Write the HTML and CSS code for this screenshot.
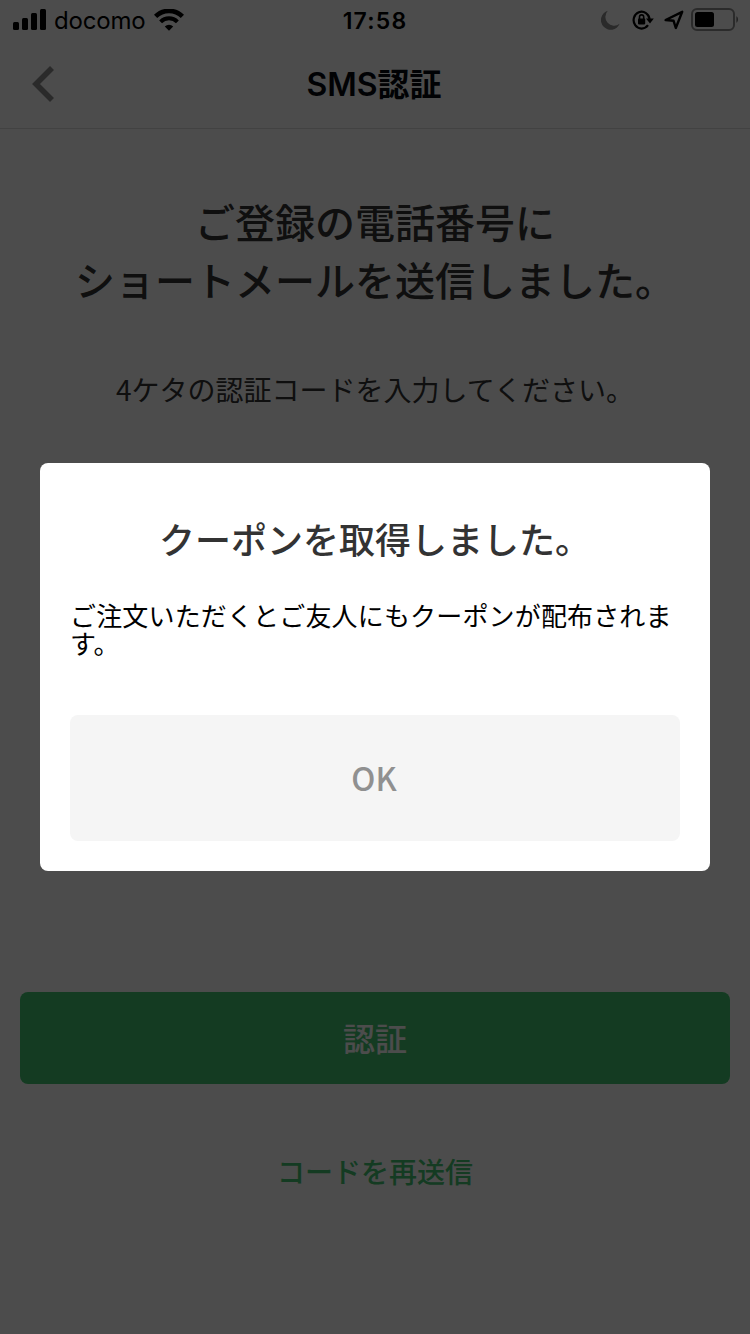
FILE: index.html
```html
<!DOCTYPE html>
<html lang="ja">
<head>
    <meta charset="UTF-8">
    <meta name="viewport" content="width=device-width, initial-scale=1.0">
    <title>SMS認証</title>
    <link rel="stylesheet" href="styles.css">
</head>
<body>

<div class="status-bar">
    <div class="status-left">
        <svg class="signal" width="34" height="22" viewBox="0 0 34 22">
            <rect x="0" y="13" width="6" height="8" rx="1.5"/>
            <rect x="9" y="9" width="6" height="12" rx="1.5"/>
            <rect x="18" y="4" width="6" height="17" rx="1.5"/>
            <rect x="27" y="0" width="6" height="21" rx="1.5"/>
        </svg>
        <span class="carrier">docomo</span>
        <svg class="wifi" width="30" height="22" viewBox="0 0 30 22">
            <path d="M1.6 7.4a19 19 0 0 1 26.8 0" fill="none" stroke="#000" stroke-width="4.6"/>
            <path d="M6.6 12.8a11.8 11.8 0 0 1 16.8 0" fill="none" stroke="#000" stroke-width="4"/>
            <path d="M10.8 17.4a6.2 6.2 0 0 1 8.4 0L15 21.8z"/>
        </svg>
    </div>
    <span class="time">17:58</span>
    <div class="status-right">
        <svg class="moon" width="20" height="20" viewBox="0 0 20 20">
            <path d="M6.8 0.8a9.7 9.7 0 1 0 11.8 13A8.8 8.8 0 0 1 6.8 0.8z" fill="#8c8c8c"/>
        </svg>
        <svg class="lock" width="22" height="20" viewBox="0 0 22 20">
            <path d="M17.6 9.5A8 8.4 0 1 0 16 15.2" fill="none" stroke="#000" stroke-width="2.2"/>
            <path d="M14 8.4h7.8l-3.8 5z"/>
            <rect x="6" y="8.4" width="7.2" height="6" rx="0.8"/>
            <path d="M7.5 9V7a2.1 2.1 0 0 1 4.2 0v2" fill="none" stroke="#000" stroke-width="1.6"/>
        </svg>
        <svg class="location" width="20" height="20" viewBox="0 0 20 20">
            <path d="M1.6 10L18.2 1.8L11.8 18L9.6 10.8z" fill="none" stroke="#000" stroke-width="2.4" stroke-linejoin="round"/>
        </svg>
        <svg class="battery" width="48" height="24" viewBox="0 0 48 24">
            <rect x="1" y="1" width="42" height="21" rx="5" fill="none" stroke="#8f8f8f" stroke-width="2"/>
            <rect x="4" y="4" width="19" height="15" rx="2.5"/>
            <path d="M45.4 8.3c2.2 1 2.2 5.4 0 6.4z" fill="#777"/>
        </svg>
    </div>
</div>

<header>
    <button class="back-btn" aria-label="戻る">
        <svg width="24" height="38" viewBox="0 0 24 38">
            <path d="M21 3L5 19L21 35" fill="none" stroke="#8c8c8c" stroke-width="5.6"/>
        </svg>
    </button>
    <h1>SMS認証</h1>
</header>

<main>
    <h2>ご登録の電話番号に<br>ショートメールを送信しました。</h2>
    <p class="lead">4ケタの認証コードを入力してください。</p>
    <button class="submit-btn">認証</button>
    <a href="#" class="resend">コードを再送信</a>
</main>

<div class="overlay">
    <div class="modal">
        <h3>クーポンを取得しました。</h3>
        <p>ご注文いただくとご友人にもクーポンが配布されます。</p>
        <button class="ok-btn">OK</button>
    </div>
</div>

</body>
</html>
```
FILE: styles.css
```css
* {
    box-sizing: border-box;
}

body {
    margin: 0;
    height: 1334px;
    overflow: hidden;
    font-family: "Noto Sans CJK JP", sans-serif;
    background: white;
    color: #333;
}

h1, h2, h3, p {
    margin: 0;
    font-weight: 500;
}

button {
    border: none;
    padding: 0;
    font-family: inherit;
    cursor: pointer;
}

svg {
    display: block;
}

.status-bar {
    display: grid;
    grid-template-columns: 1fr auto 1fr;
    align-items: center;
    height: 40px;
    padding: 0 11px 0 13px;
    font-family: Inter, sans-serif;
    color: #000;
}

.status-left, .status-right {
    display: flex;
    align-items: center;
}

.status-right {
    justify-content: flex-end;
}

.carrier {
    margin: 2px 9px 0 7px;
    font-size: 24px;
    line-height: 30px;
    letter-spacing: -0.2px;
}

.time {
    margin: 2px 2px 0 0;
    font-size: 23px;
    font-weight: 600;
    letter-spacing: 1.2px;
}

.moon {
    margin-right: 11px;
}

.lock {
    margin-right: 10px;
}

.location {
    margin-right: 7px;
}

header {
    display: grid;
    grid-template-columns: 80px 1fr 80px;
    align-items: center;
    height: 89px;
    border-bottom: 1px solid #dcdcdc;
}

.back-btn {
    padding-left: 31px;
    background: none;
}

header h1 {
    padding: 2px 2px 0 0;
    font-family: Inter, "Noto Sans CJK JP", sans-serif;
    font-size: 32px;
    font-weight: 600;
    line-height: 40px;
    text-align: center;
    color: #060810;
}

main {
    display: flex;
    flex-direction: column;
    padding: 63px 20px 0;
    text-align: center;
}

h2 {
    font-size: 40px;
    line-height: 58px;
}

.lead {
    margin-top: 61px;
    font-size: 28px;
    font-weight: 400;
    line-height: 40px;
}

.submit-btn {
    height: 92px;
    margin-top: 583px;
    padding-bottom: 2px;
    border-radius: 8px;
    background: #43c672;
    color: white;
    font-size: 32px;
    font-weight: 500;
}

.resend {
    margin-top: 67px;
    font-size: 28px;
    font-weight: 500;
    line-height: 40px;
    color: #43c672;
    text-decoration: none;
}

.overlay {
    position: absolute;
    inset: 0;
    display: flex;
    align-items: center;
    justify-content: center;
    background: rgba(0, 0, 0, 0.7);
}

.modal {
    width: 670px;
    height: 408px;
    padding: 49px 30px 30px;
    border-radius: 8px;
    background: white;
}

.modal h3 {
    font-size: 36px;
    line-height: 52px;
    text-align: center;
}

.modal p {
    height: 114px;
    margin-top: 37px;
    font-size: 26px;
    font-weight: 400;
    line-height: 28px;
    letter-spacing: 0.16px;
    color: #000;
}

.ok-btn {
    width: 100%;
    height: 126px;
    padding: 0 2px 2px 0;
    border-radius: 8px;
    background: #f5f5f5;
    color: #909090;
    font-size: 32px;
    font-weight: 500;
}
```
